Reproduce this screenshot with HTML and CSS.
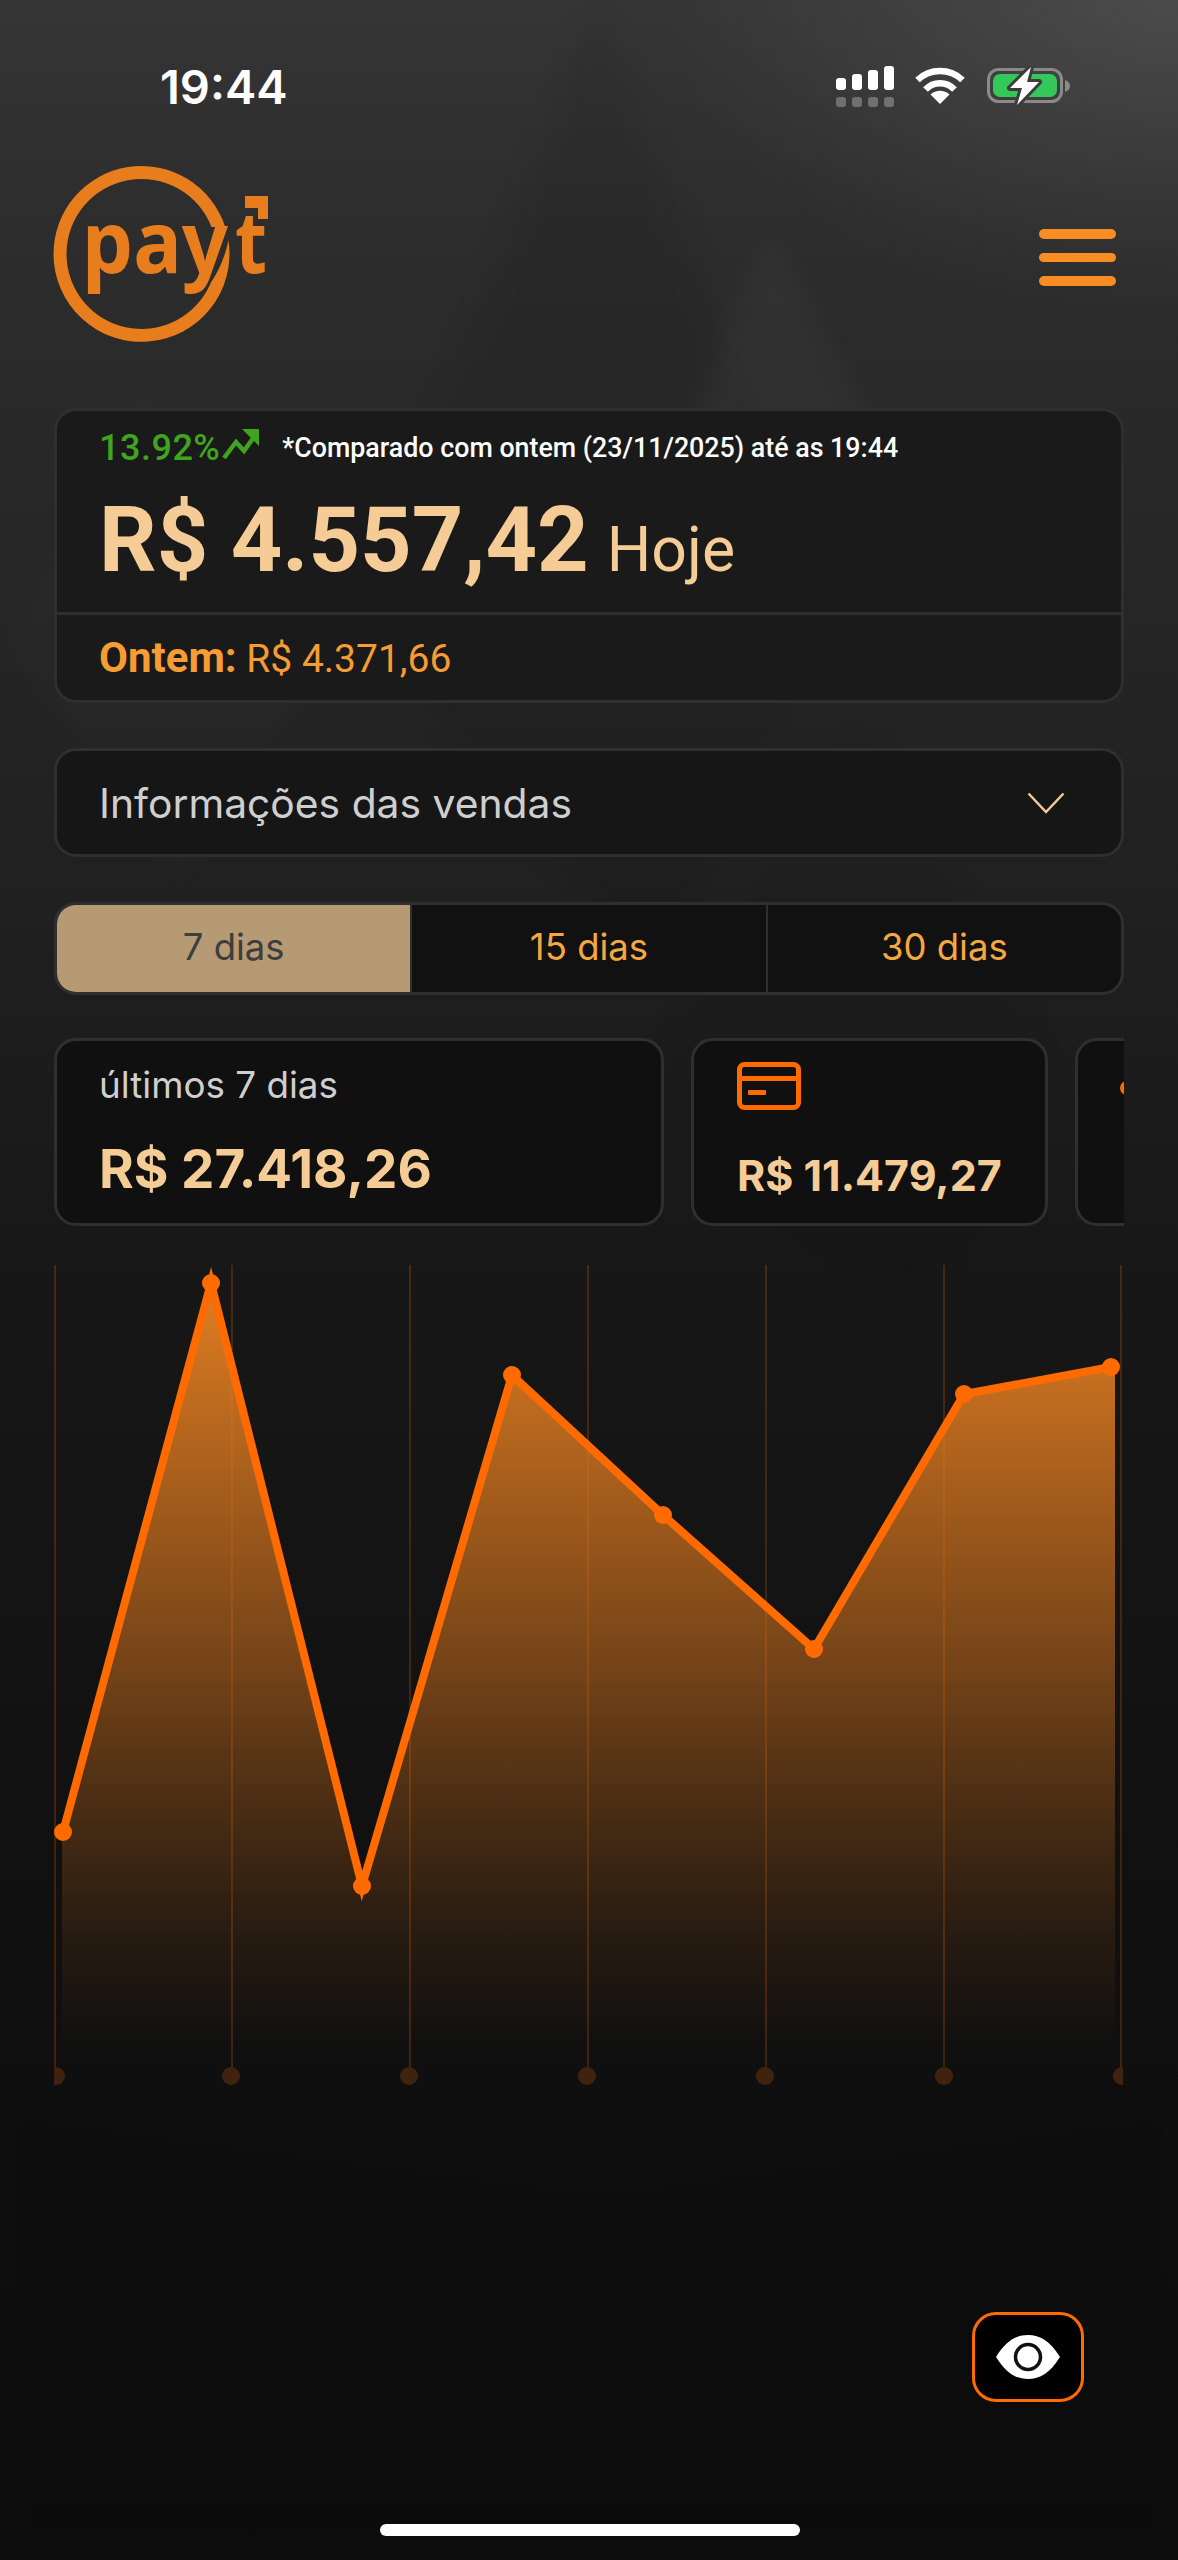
FILE: index.html
```html
<!DOCTYPE html>
<html lang="pt-BR">
<head>
<meta charset="utf-8">
<title>Payt</title>
<link rel="stylesheet" href="styles.css">
</head>
<body>
<div class="page">
  <svg class="texture" viewBox="0 0 1178 2560" aria-hidden="true">
    <polygon points="597,10 830,620 660,980 360,620" fill="#000" opacity=".07"/>
    <polygon points="850,700 1040,1050 920,1300 640,1100" fill="#000" opacity=".05"/>
    <polygon points="770,230 900,480 830,620 690,420" fill="#fff" opacity=".03"/>
    <polygon points="140,380 360,620 180,900 0,640" fill="#fff" opacity=".012"/>
    <polygon points="0,2100 600,2180 1178,2100 1178,2560 0,2560" fill="#000" opacity=".08"/>
  </svg>

  <header class="status">
    <span class="clock">19:44</span>
    <div class="status-icons">
      <svg class="ic-signal" viewBox="0 0 58 42" width="58" height="42">
        <g fill="#fff">
          <rect x="0" y="13" width="10" height="12" rx="3"/>
          <rect x="16" y="9" width="10" height="16" rx="3"/>
          <rect x="32" y="5" width="10" height="20" rx="3"/>
          <rect x="48" y="1" width="10" height="24" rx="3"/>
        </g>
        <g fill="#fff" opacity=".28">
          <rect x="0" y="32" width="10" height="10" rx="3"/>
          <rect x="16" y="32" width="10" height="10" rx="3"/>
          <rect x="32" y="32" width="10" height="10" rx="3"/>
          <rect x="48" y="32" width="10" height="10" rx="3"/>
        </g>
      </svg>
      <svg class="ic-wifi" viewBox="0 0 50 38" width="50" height="38">
        <path d="M25 38 L15.500 28.500 C21 23.500 29 23.500 34.500 28.500Z" fill="#fff"/>
        <path d="M10.500 23.500 C18.500 15 31.500 15 39.500 23.500" fill="none" stroke="#fff" stroke-width="6.500"/>
        <path d="M2.500 14 C15 2 35 2 47.500 14" fill="none" stroke="#fff" stroke-width="6.500"/>
      </svg>
      <svg class="ic-battery" viewBox="0 0 84 40" width="84" height="40">
        <rect x="1.500" y="3.500" width="73" height="32" rx="10" fill="none" stroke="#8a8a8a" stroke-width="3"/>
        <path d="M78 14 C81 15 83 17 83 20 C83 23 81 25 78 26Z" fill="#8a8a8a"/>
        <rect x="6" y="8" width="64" height="23" rx="7" fill="#34c759"/>
        <path d="M44 1 L23 22 L35 22 L30 39 L52 16 L40 16Z" fill="#fff" stroke="#3c3c3c" stroke-width="6" stroke-linejoin="round" paint-order="stroke"/>
      </svg>
    </div>
  </header>

  <div class="topbar">
    <svg class="logo" viewBox="0 0 225 185" width="225" height="185" role="img" aria-label="Payt">
      <path class="logo-fill" d="M172.250 61 A88 88 0 0 0 0.500 88 A88 88 0 1 0 175.400 74 C172 92 165 106 157.670 117 A75 75 0 0 1 13.500 88 A75 75 0 0 1 158.470 61Z"/>
      <text class="logo-text" x="29" y="107" textLength="146" lengthAdjust="spacingAndGlyphs">pay</text>
      <text class="logo-text" x="182" y="107" textLength="32" lengthAdjust="spacingAndGlyphs">t</text>
      <polygon class="logo-fill" points="192,30 215,30 215,53 205,53 205,42 192,42"/>
    </svg>
    <div class="menu"><i></i><i></i><i></i></div>
  </div>

  <main class="content">
    <section class="card today">
      <div class="today-main">
        <div class="compare">
          <span class="pct">13.92%</span>
          <svg class="trend" viewBox="0 0 38 32" width="38" height="32">
            <path d="M2 30 L14 14 L22 23 L34 6" fill="none" stroke="#3fa41f" stroke-width="4.500"/>
            <polygon points="20,1 37,1 37,18" fill="#3fa41f"/>
          </svg>
          <span class="note">*Comparado com ontem (23/11/2025) até as 19:44</span>
        </div>
        <div class="amount-row">
          <span class="amount">R$ 4.557,42</span>
          <span class="amount-label">Hoje</span>
        </div>
      </div>
      <div class="yesterday"><b>Ontem:</b> R$ 4.371,66</div>
    </section>

    <section class="card info">
      <span>Informações das vendas</span>
      <svg viewBox="0 0 38 22" width="38" height="22"><path d="M1.500 1.500 L19 20 L36.500 1.500" fill="none" stroke="#f5ca94" stroke-width="2.500"/></svg>
    </section>

    <nav class="tabs">
      <span class="tab active">7 dias</span>
      <span class="tab">15 dias</span>
      <span class="tab">30 dias</span>
    </nav>

    <section class="stats">
      <div class="stat stat-total">
        <span class="stat-label">últimos 7 dias</span>
        <strong>R$ 27.418,26</strong>
      </div>
      <div class="stat stat-card">
        <svg viewBox="0 0 64 48" width="64" height="48">
          <rect x="2.500" y="2.500" width="59" height="43" rx="5" fill="none" stroke="#ff6b00" stroke-width="5"/>
          <rect x="2.500" y="14" width="59" height="5" fill="#ff6b00"/>
          <rect x="11" y="28" width="18" height="5" rx="1" fill="#ff6b00"/>
        </svg>
        <strong>R$ 11.479,27</strong>
      </div>
      <div class="stat stat-next"><i></i></div>
    </section>

    <svg class="chart" viewBox="0 0 1069 825" width="1069" height="825" aria-hidden="true">
      <defs>
        <linearGradient id="area" x1="0" y1="0" x2="0" y2="1">
          <stop offset="0" stop-color="#e07e22" stop-opacity="1"/>
          <stop offset=".5" stop-color="#d0701c" stop-opacity=".52"/>
          <stop offset=".85" stop-color="#b86218" stop-opacity=".14"/>
          <stop offset="1" stop-color="#b86218" stop-opacity="0"/>
        </linearGradient>
      </defs>
      <g class="grid">
        <line x1="1" y1="0" x2="1" y2="810"/>
        <line x1="178" y1="0" x2="178" y2="810"/>
        <line x1="356" y1="0" x2="356" y2="810"/>
        <line x1="534" y1="0" x2="534" y2="810"/>
        <line x1="712" y1="0" x2="712" y2="810"/>
        <line x1="890" y1="0" x2="890" y2="810"/>
        <line x1="1067" y1="0" x2="1067" y2="810"/>
      </g>
      <g class="grid-dots">
        <circle cx="2" cy="811" r="9"/>
        <circle cx="177" cy="811" r="9"/>
        <circle cx="355" cy="811" r="9"/>
        <circle cx="533" cy="811" r="9"/>
        <circle cx="711" cy="811" r="9"/>
        <circle cx="890" cy="811" r="9"/>
        <circle cx="1068" cy="811" r="9"/>
      </g>
      <polygon fill="url(#area)" points="8,567 157,18 308,621 458,110 609,250 760,384 910,129 1061,102 1061,785 8,785"/>
      <polyline class="line" points="9,567 157,18 308,621 458,110 609,250 760,384 910,129 1057,102"/>
      <g fill="#ff6b00">
        <circle cx="9" cy="567" r="9"/>
        <circle cx="157" cy="18" r="9"/>
        <circle cx="308" cy="621" r="9"/>
        <circle cx="458" cy="110" r="9"/>
        <circle cx="609" cy="250" r="9"/>
        <circle cx="760" cy="384" r="9"/>
        <circle cx="910" cy="129" r="9"/>
        <circle cx="1057" cy="102" r="9"/>
      </g>
    </svg>
  </main>

  <button class="eye" type="button" aria-label="Mostrar ou ocultar valores">
    <svg viewBox="0 0 64 46" width="64" height="46">
      <path d="M0 23 C10 7 20 1 32 1 C44 1 54 7 64 23 C54 39 44 45 32 45 C20 45 10 39 0 23Z" fill="#fff"/>
      <circle cx="32" cy="23" r="12.500" fill="#fff" stroke="#111" stroke-width="3.500"/>
    </svg>
  </button>
  <div class="home"></div>
</div>
</body>
</html>
```
FILE: styles.css
```css
* { box-sizing: border-box; }

html, body {
  margin: 0;
  padding: 0;
  background: #0c0c0c;
}

.page {
  position: relative;
  width: 1178px;
  height: 2560px;
  overflow: hidden;
  font-family: Roboto, "Liberation Sans", sans-serif;
  background:
    radial-gradient(ellipse 520px 320px at 100% 0, rgba(255,255,255,.11), rgba(255,255,255,0)),
    linear-gradient(180deg, #353535 0, #2d2d2d 220px, #292929 420px, #202020 900px, #171717 1280px, #101010 1900px, #0d0d0d 2560px);
}

.texture {
  position: absolute;
  left: 0;
  top: 0;
  width: 1178px;
  height: 2560px;
  filter: blur(14px);
}

.status {
  position: relative;
  display: flex;
  justify-content: space-between;
  align-items: flex-start;
  height: 166px;
  padding: 60px 108px 0 160px;
}

.clock {
  color: #fff;
  font-family: Inter, sans-serif;
  font-size: 47px;
  font-weight: 600;
  line-height: 54px;
}

.status-icons {
  display: flex;
  align-items: flex-start;
  padding-top: 5px;
  margin-right: -1px;
}

.ic-signal { margin-right: 21px; }
.ic-wifi { margin-right: 22px; margin-top: 1px; }
.ic-battery { margin-top: 1px; }

.topbar {
  position: relative;
  display: flex;
  justify-content: space-between;
  align-items: center;
  height: 185px;
  padding: 0 62px 0 53px;
}

.logo-fill { fill: #e87d1e; }

.logo-text {
  fill: #e87d1e;
  font-family: "Noto Sans", sans-serif;
  font-weight: 700;
  font-size: 86px;
}

.menu {
  display: flex;
  flex-direction: column;
  gap: 14px;
  width: 77px;
  margin-top: -2px;
}

.menu i {
  display: block;
  height: 9.500px;
  border-radius: 5px;
  background: #f88d24;
}

.content {
  position: relative;
  display: flex;
  flex-direction: column;
  padding: 57px 54px 0 54px;
}

.card {
  border: 3px solid #2f2f2f;
  border-radius: 22px;
}

.today {
  height: 295px;
  background: #1a1a1a;
}

.today-main {
  height: 204px;
  padding: 17px 42px 0;
  border-bottom: 3px solid #2f2f2f;
}

.compare {
  display: flex;
  align-items: center;
  height: 40px;
}

.pct {
  color: #3fa41f;
  font-size: 36px;
  font-weight: 500;
  letter-spacing: .5px;
}

.trend { margin: -8px 22px 0 2px; }

.note {
  color: #fff;
  font-size: 26.800px;
  font-weight: 500;
}

.amount-row {
  display: flex;
  align-items: baseline;
  gap: 18px;
  margin-top: 23px;
  color: #f6cc96;
}

.amount {
  font-size: 90px;
  font-weight: 700;
  line-height: 100px;
}

.amount-label {
  font-size: 62.500px;
  font-weight: 400;
}

.yesterday {
  padding: 20px 42px 0;
  color: #f59c33;
  font-size: 39px;
  line-height: 46px;
  font-weight: 400;
}

.yesterday b {
  font-size: 42px;
  font-weight: 700;
}

.info {
  display: flex;
  justify-content: space-between;
  align-items: center;
  height: 109px;
  margin-top: 45px;
  padding: 0 56px 0 42px;
  background: #161616;
  color: #cfcfcf;
  font-family: Inter, sans-serif;
  font-size: 40.800px;
}

.tabs {
  display: flex;
  height: 93px;
  margin-top: 45px;
  border: 3px solid #2f2f2f;
  border-radius: 22px;
  background: #111;
  overflow: hidden;
  font-family: Inter, sans-serif;
  font-size: 36.500px;
}

.tab {
  flex: 1;
  display: flex;
  align-items: center;
  justify-content: center;
  padding-bottom: 3px;
  color: #f5a83f;
  border-left: 2px solid #2f2f2f;
}

.tab:first-child { border-left: 0; }

.tab.active {
  background: #b69a74;
  color: #3d3d3d;
}

.stats {
  display: flex;
  gap: 27px;
  height: 188px;
  margin-top: 43px;
  overflow: hidden;
  font-family: Inter, sans-serif;
}

.stat {
  flex: none;
  border: 3px solid #2f2f2f;
  border-radius: 22px;
  background: #101010;
  color: #f6cc96;
}

.stat-total {
  width: 610px;
  padding: 22px 42px 0;
}

.stat-label {
  display: block;
  color: #cfcfcf;
  font-size: 36.800px;
  line-height: 44px;
}

.stat-total strong {
  display: block;
  margin-top: 31px;
  font-size: 53px;
  font-weight: 700;
  line-height: 62px;
}

.stat-card {
  width: 357px;
  padding: 21px 43px 0;
}

.stat-card svg { display: block; }

.stat-card strong {
  display: block;
  margin-top: 40px;
  font-size: 43px;
  font-weight: 700;
  line-height: 50px;
}

.stat-next {
  width: 300px;
  padding: 40px 0 0 42px;
}

.stat-next i {
  display: block;
  width: 14px;
  height: 14px;
  border-radius: 50%;
  background: #ff6b00;
}

.chart {
  display: block;
  margin-top: 39px;
}

.grid line {
  stroke: rgba(255, 107, 0, .22);
  stroke-width: 2;
}

.grid-dots circle { fill: #40230f; }

.line {
  fill: none;
  stroke: #ff6b00;
  stroke-width: 8;
  stroke-linejoin: miter;
}

.eye {
  position: absolute;
  left: 972px;
  top: 2312px;
  display: flex;
  align-items: center;
  justify-content: center;
  width: 112px;
  height: 90px;
  padding: 0;
  border: 3px solid #ff6b00;
  border-radius: 24px;
  background: #000;
}

.home {
  position: absolute;
  left: 380px;
  top: 2524px;
  width: 420px;
  height: 12px;
  border-radius: 6px;
  background: #fff;
}
```
